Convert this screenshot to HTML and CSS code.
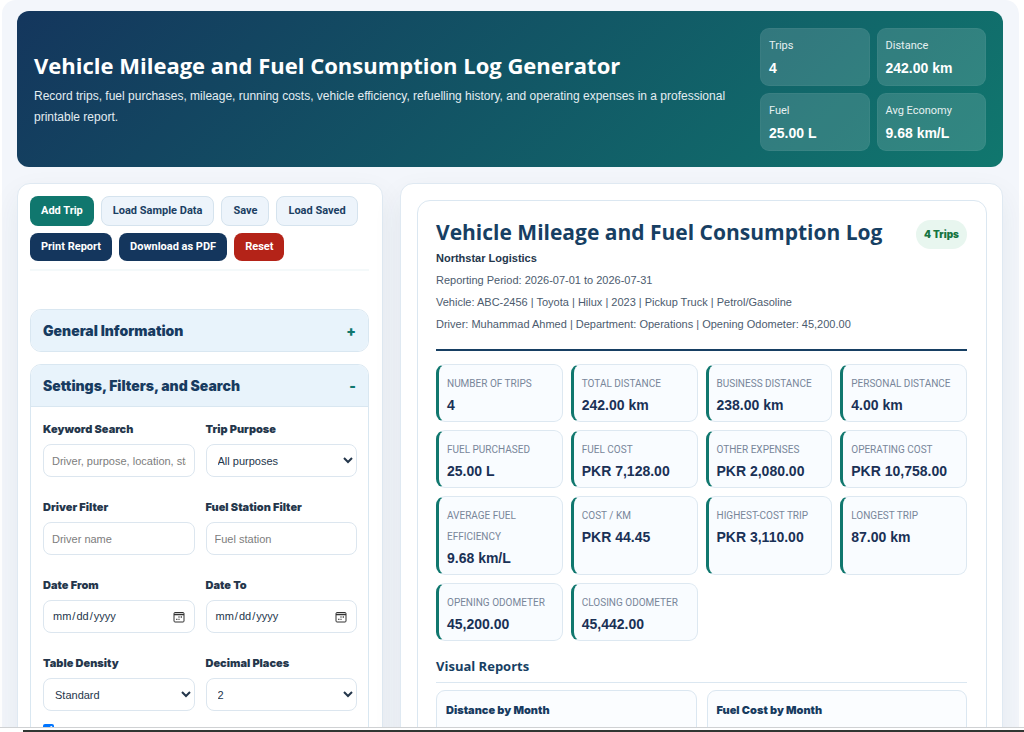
FILE: index.html
```html
<!DOCTYPE html>
<html lang="en">
<head>
<meta charset="utf-8">
<meta name="viewport" content="width=device-width, initial-scale=1">
<title>Vehicle Mileage and Fuel Consumption Log Generator</title>
<link rel="stylesheet" href="styles.css">
</head>
<body>
<div class="viewport">
  <div class="app">
    <header class="hero">
      <div class="hero-text">
        <h1>Vehicle Mileage and Fuel Consumption Log Generator</h1>
        <p>Record trips, fuel purchases, mileage, running costs, vehicle efficiency, refuelling history, and operating expenses in a professional printable report.</p>
      </div>
      <div class="hero-stats">
        <div class="hero-stat"><span>Trips</span><strong>4</strong></div>
        <div class="hero-stat"><span>Distance</span><strong>242.00 km</strong></div>
        <div class="hero-stat"><span>Fuel</span><strong>25.00 L</strong></div>
        <div class="hero-stat"><span>Avg Economy</span><strong>9.68 km/L</strong></div>
      </div>
    </header>
    <div class="workspace">
      <aside class="panel controls">
        <div class="toolbar">
          <button class="btn btn-teal" type="button">Add Trip</button>
          <button class="btn btn-light" type="button">Load Sample Data</button>
          <button class="btn btn-light" type="button">Save</button>
          <button class="btn btn-light" type="button">Load Saved</button>
          <button class="btn btn-navy" type="button">Print Report</button>
          <button class="btn btn-navy" type="button">Download as PDF</button>
          <button class="btn btn-red" type="button">Reset</button>
        </div>
        <section class="accordion">
          <button class="accordion-head" type="button" aria-expanded="false"><span>General Information</span><span class="sign">+</span></button>
        </section>
        <section class="accordion open">
          <button class="accordion-head" type="button" aria-expanded="true"><span>Settings, Filters, and Search</span><span class="sign">-</span></button>
          <div class="accordion-body">
            <div class="field"><label for="keyword">Keyword Search</label><input id="keyword" type="text" placeholder="Driver, purpose, location, station"></div>
            <div class="field"><label for="purpose">Trip Purpose</label><select id="purpose"><option>All purposes</option></select></div>
            <div class="field"><label for="driver">Driver Filter</label><input id="driver" type="text" placeholder="Driver name"></div>
            <div class="field"><label for="station">Fuel Station Filter</label><input id="station" type="text" placeholder="Fuel station"></div>
            <div class="field"><label for="from">Date From</label><input id="from" type="date"></div>
            <div class="field"><label for="to">Date To</label><input id="to" type="date"></div>
            <div class="field"><label for="density">Table Density</label><select id="density"><option>Standard</option></select></div>
            <div class="field"><label for="decimals">Decimal Places</label><select id="decimals"><option>2</option></select></div>
            <input class="check" type="checkbox" checked aria-label="Option">
          </div>
        </section>
      </aside>
      <main class="panel preview">
        <article class="report">
          <header class="report-head">
            <div>
              <h2>Vehicle Mileage and Fuel Consumption Log</h2>
              <p><strong>Northstar Logistics</strong></p>
              <p>Reporting Period: 2026-07-01 to 2026-07-31</p>
              <p>Vehicle: ABC-2456 | Toyota | Hilux | 2023 | Pickup Truck | Petrol/Gasoline</p>
              <p>Driver: Muhammad Ahmed | Department: Operations | Opening Odometer: 45,200.00</p>
            </div>
            <span class="badge">4 Trips</span>
          </header>
          <div class="metrics">
            <div class="metric"><span>Number of Trips</span><strong>4</strong></div>
            <div class="metric"><span>Total Distance</span><strong>242.00 km</strong></div>
            <div class="metric"><span>Business Distance</span><strong>238.00 km</strong></div>
            <div class="metric"><span>Personal Distance</span><strong>4.00 km</strong></div>
            <div class="metric"><span>Fuel Purchased</span><strong>25.00 L</strong></div>
            <div class="metric"><span>Fuel Cost</span><strong>PKR 7,128.00</strong></div>
            <div class="metric"><span>Other Expenses</span><strong>PKR 2,080.00</strong></div>
            <div class="metric"><span>Operating Cost</span><strong>PKR 10,758.00</strong></div>
            <div class="metric"><span>Average Fuel Efficiency</span><strong>9.68 km/L</strong></div>
            <div class="metric"><span>Cost / km</span><strong>PKR 44.45</strong></div>
            <div class="metric"><span>Highest-Cost Trip</span><strong>PKR 3,110.00</strong></div>
            <div class="metric"><span>Longest Trip</span><strong>87.00 km</strong></div>
            <div class="metric"><span>Opening Odometer</span><strong>45,200.00</strong></div>
            <div class="metric"><span>Closing Odometer</span><strong>45,442.00</strong></div>
          </div>
          <h3 class="section-title">Visual Reports</h3>
          <div class="charts">
            <section class="chart"><h4>Distance by Month</h4></section>
            <section class="chart"><h4>Fuel Cost by Month</h4></section>
          </div>
        </article>
      </main>
    </div>
  </div>
</div>
<div class="edge"><div class="edge-bar"></div></div>
</body>
</html>
```
FILE: styles.css
```css
* { box-sizing: border-box; }

body {
  margin: 0;
  height: 100vh;
  display: flex;
  flex-direction: column;
  overflow: hidden;
  background: #fff;
  color: #24364b;
  font: 11px/21px "Liberation Sans", Arial, sans-serif;
}

h1, h2, h3, h4, p { margin: 0; }
button, input, select { font: inherit; color: inherit; }

.viewport { flex: 1; min-height: 0; overflow: hidden; }

.app {
  margin: 0 5px 0 2px;
  padding: 11px 16px 16px 15px;
  border-radius: 14px 14px 0 0;
  background: #f3f6fb;
}

.hero {
  display: grid;
  grid-template-columns: minmax(0, 1fr) 226px;
  gap: 17px;
  align-items: center;
  padding: 17px 17px 16px;
  border-radius: 12px;
  background: linear-gradient(135deg, #14365d, #10776e);
  color: #fff;
}
.hero h1 {
  margin-bottom: 8px;
  font: 700 22px/26px "Open Sans", sans-serif;
}
.hero p { font-size: 12px; color: #e3edf2; }

.hero-stats { display: grid; grid-template-columns: 1fr 1fr; gap: 7px; }
.hero-stat {
  display: flex;
  flex-direction: column;
  padding: 5px 8px;
  border: 1px solid rgba(255, 255, 255, 0.04);
  border-radius: 9px;
  background: rgba(255, 255, 255, 0.14);
}
.hero-stat span { font-family: Roboto, sans-serif; line-height: 23px; color: #e6f0f1; }
.hero-stat strong { font-size: 14px; line-height: 23px; }

.workspace {
  display: grid;
  grid-template-columns: 366fr 603fr;
  gap: 17px;
  align-items: start;
  margin-top: 16px;
}
.panel {
  border: 1px solid #dfe9f2;
  border-radius: 13px;
  background: #fff;
  box-shadow: 0 12px 30px rgba(30, 50, 75, 0.07);
}
.controls { padding: 12px 13px 12px 12px; }

.toolbar {
  display: flex;
  flex-wrap: wrap;
  gap: 7px;
  padding-bottom: 8px;
  margin-bottom: 38px;
  border-bottom: 2px solid #f4f9fa;
}
.btn {
  padding: 4px 11px;
  border: 0;
  border-radius: 8px;
  font-family: Roboto, sans-serif;
  font-weight: 700;
  line-height: 20px;
  color: #fff;
}
.btn-teal { background: #10776e; }
.btn-navy { background: #14365d; }
.btn-red { background: #b42318; }
.btn-light { border: 1px solid #d5e3ee; background: #edf4fb; color: #1b3f63; }

.accordion {
  margin-bottom: 12px;
  overflow: hidden;
  border: 1px solid #d9e7f1;
  border-radius: 11px;
}
.accordion-head {
  display: flex;
  justify-content: space-between;
  width: 100%;
  padding: 10px 12px;
  border: 0;
  background: #e8f3fb;
  color: #173b60;
  font: 900 14px/21px Inter, sans-serif;
}
.sign { color: #10776e; }
.open .accordion-head { border-bottom: 1px solid #d9e7f1; }
.accordion-body {
  display: grid;
  grid-template-columns: 1fr 1fr;
  gap: 20px 11px;
  padding: 12px 11px 13px 12px;
}
.field { display: flex; flex-direction: column; gap: 4px; min-width: 0; }
.field label { font: 900 11px/21px Inter, sans-serif; }
.field input, .field select {
  width: 100%;
  height: 33px;
  padding: 0 8px;
  border: 1px solid #dce6ef;
  border-radius: 8px;
  background: #fff;
}
.field input::placeholder { color: #7d7d7d; }
.field select { padding: 0 3px 0 7px; }
.field input::-webkit-calendar-picker-indicator {
  width: 12px;
  height: 12px;
  padding: 0;
  margin-right: 1px;
  background: url("data:image/svg+xml,%3Csvg xmlns='http://www.w3.org/2000/svg' viewBox='0 0 12 12' fill='none' stroke='%23333'%3E%3Crect x='1' y='1.5' width='10' height='9.5' rx='1'/%3E%3Cpath d='M1 3.5h10M5.5 6h1M7.7 6h1.2M3.2 8.3h1.2M5.5 8.3h1' stroke-width='1.3'/%3E%3C/svg%3E") center / 12px 12px no-repeat;
}
.check { width: 11px; height: 11px; margin: -7px 0 0; }

.preview { padding: 16px 15px 16px 16px; }
.report { padding: 19px 19px 18px 18px; border: 1px solid #dbe7f1; border-radius: 13px; }
.report-head {
  display: flex;
  justify-content: space-between;
  align-items: flex-start;
  padding-bottom: 14px;
  border-bottom: 2px solid #173f63;
}
.report-head h2 {
  margin-bottom: 3px;
  font: 700 21px/24px "Open Sans", sans-serif;
  color: #173f63;
}
.report-head p { line-height: 22px; color: #4c5b6e; }
.report-head p strong { color: #24364b; }
.badge {
  padding: 4px 8px;
  border-radius: 15px;
  background: #e8f6ef;
  color: #16743f;
  font: 900 10px/21px Inter, sans-serif;
}

.metrics {
  display: grid;
  grid-template-columns: repeat(4, minmax(0, 1fr));
  gap: 8px;
  margin-top: 13px;
}
.metric {
  display: flex;
  flex-direction: column;
  padding: 8px 7px 4px 8px;
  border: 1px solid #dde8f1;
  border-left: 3px solid #10776e;
  border-radius: 9px;
  background: #f9fcff;
}
.metric span { font-family: Roboto, sans-serif; font-size: 10px; text-transform: uppercase; color: #78869a; }
.metric strong { font-size: 14px; line-height: 23px; color: #1a3156; }

.section-title {
  margin: 14px 0 7px;
  padding-bottom: 5px;
  border-bottom: 1px solid #dbe7f1;
  font: 700 13px/22px "Open Sans", sans-serif;
  color: #173f63;
}
.charts { display: grid; grid-template-columns: 1fr 1fr; gap: 10px; }
.chart {
  min-height: 180px;
  padding: 9px;
  border: 1px solid #dbe7f1;
  border-radius: 9px;
  background: #fbfdff;
}
.chart h4 { font: 900 11px/20px Inter, sans-serif; color: #173b60; }

.edge { padding-top: 2px; border-top: 1px solid #cfd1d3; background: #fff; }
.edge-bar { height: 2px; margin-left: 23px; background: #303632; }
```
